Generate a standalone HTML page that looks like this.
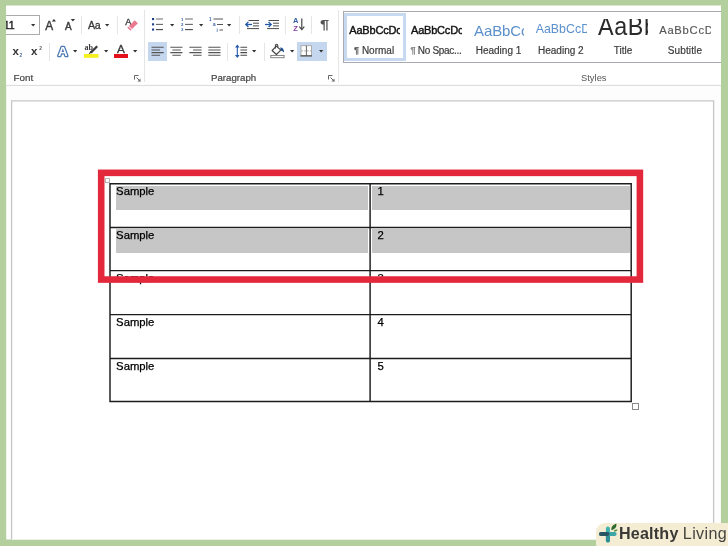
<!DOCTYPE html>
<html>
<head>
<meta charset="utf-8">
<title>Word table selection</title>
<style>
html,body{margin:0;padding:0;}
body{width:728px;height:546px;overflow:hidden;background:#b3cf9e;font-family:"Liberation Sans",sans-serif;position:relative;}
div,span{box-sizing:border-box;}
.a{position:absolute;}
.t{position:absolute;white-space:nowrap;color:#444;line-height:1;}
.sep{position:absolute;width:1px;background:#e5e5e5;}
.dd{position:absolute;width:0;height:0;border-left:2.5px solid transparent;border-right:2.5px solid transparent;border-top:2.8px solid #444;}
svg{position:absolute;overflow:visible;}
.hl{position:absolute;background:#c6c6c6;}
.bl{position:absolute;background:#1c1c1c;}
.ct{position:absolute;font-size:11.3px;color:#000;-webkit-text-stroke:0.25px #000;line-height:1;white-space:nowrap;}
.gl{position:absolute;font-size:10px;color:#3c3c3c;-webkit-text-stroke:0.2px #3c3c3c;line-height:1;white-space:nowrap;}
</style>
</head>
<body>
<div id="root" style="position:absolute;left:0;top:0;width:728px;height:546px;will-change:transform;">
<svg style="left:0;top:0;" width="728" height="546" viewBox="0 0 728 546"><rect x="6.2" y="5.7" width="714.7" height="533.8" fill="#fdfdfd"/><rect x="6.2" y="5.7" width="714.7" height="79.3" fill="#fff"/><path d="M6.2 85.4 H720.9" stroke="#d9d9d9" stroke-width="1"/></svg>
<svg style="left:0;top:0;" width="728" height="546" viewBox="0 0 728 546"><path d="M11.6 539.5 V100.9 H713.6 V539.5" fill="#fff" stroke="#c6c6c8" stroke-width="1.3"/></svg>
<!-- font group -->
<div class="a" style="left:6px;top:15px;width:34px;height:19.5px;border:1px solid #ababab;border-left:none;background:#fff;overflow:hidden;"><div class="t" style="left:-2.3px;top:3.6px;font-size:10.6px;color:#222;-webkit-text-stroke:0.4px #222;">11</div></div>
<svg style="left:30.95px;top:23.9px;" width="5" height="3" viewBox="0 0 5 3"><path d="M0 0 H4.3 L2.15 2.6 Z" fill="#333"/></svg>
<div class="t" style="left:45.2px;top:20.5px;font-size:11.9px;color:#3a3a3a;-webkit-text-stroke:0.4px #3a3a3a;">A</div>
<svg style="left:52.2px;top:19px;" width="4" height="3" viewBox="0 0 4 3"><path d="M-0.2 2.5 H4 L1.9 0 Z" fill="#333"/></svg>
<div class="t" style="left:65px;top:21.5583px;font-size:10px;color:#3a3a3a;-webkit-text-stroke:0.4px #3a3a3a;">A</div>
<svg style="left:71px;top:18.9px;" width="4" height="3" viewBox="0 0 4 3"><path d="M-0.2 0 H4 L1.9 2.5 Z" fill="#333"/></svg>
<div class="sep" style="left:81px;top:16px;height:18px;"></div>
<div class="t" style="left:88.1px;top:19.6px;font-size:10.7px;letter-spacing:-0.35px;color:#3a3a3a;-webkit-text-stroke:0.3px #3a3a3a;">Aa</div>
<svg style="left:105.15px;top:23.7px;" width="5" height="3" viewBox="0 0 5 3"><path d="M0 0 H4.3 L2.15 2.6 Z" fill="#333"/></svg>
<div class="sep" style="left:117px;top:16px;height:18px;"></div>
<svg style="left:124px;top:17px;" width="15" height="15" viewBox="0 0 15 15">
<text x="1.2" y="8.3" font-family="Liberation Sans, sans-serif" font-size="9.2" fill="#333" stroke="#333" stroke-width="0.3">A</text>
<g transform="rotate(-45 8.7 8.3)"><rect x="5.6" y="6.1" width="8.2" height="4.4" fill="#e8798f"/><rect x="3.3" y="6.1" width="1.5" height="4.4" fill="#e8798f"/></g>
</svg>
<div class="t" style="left:12.5px;top:46px;font-size:11.5px;font-weight:bold;color:#333;">x</div>
<div class="t" style="left:19.5px;top:53.9px;font-size:4.8px;font-weight:bold;color:#4a6a9a;">2</div>
<div class="t" style="left:31px;top:46px;font-size:11.5px;font-weight:bold;color:#333;">x</div>
<div class="t" style="left:39.3px;top:46.8px;font-size:4.8px;font-weight:bold;color:#555;">2</div>
<div class="sep" style="left:49px;top:43px;height:18px;"></div>
<svg style="left:55px;top:42px;" width="16" height="16" viewBox="0 0 16 16">
<text x="7.8" y="13.6" text-anchor="middle" font-family="Liberation Sans, sans-serif" font-size="13.4" font-weight="bold" fill="#fff" stroke="#4b78b3" stroke-width="2.5" stroke-linejoin="round" paint-order="stroke">A</text>
</svg>
<svg style="left:72.95px;top:50px;" width="5" height="3" viewBox="0 0 5 3"><path d="M0 0 H4.3 L2.15 2.6 Z" fill="#333"/></svg>
<svg style="left:83.8px;top:44px;" width="15" height="15" viewBox="0 0 15 15">
<text x="0.6" y="6.2" font-family="Liberation Serif, serif" font-size="8" font-weight="bold" fill="#3a3a3a">ab</text>
<path d="M13.2 2.2 L6.8 8.6" stroke="#3a3a3a" stroke-width="2.3" stroke-linecap="butt"/>
<path d="M6.6 7 L4.4 10.4 L8 8.6 Z" fill="#3a3a3a"/>
<rect x="0" y="10" width="14.5" height="3.8" fill="#f6f01e"/>
</svg>
<svg style="left:103.55px;top:50.1px;" width="5" height="3" viewBox="0 0 5 3"><path d="M0 0 H4.3 L2.15 2.6 Z" fill="#333"/></svg>
<div class="t" style="left:116.9px;top:44.2px;font-size:11.8px;color:#3a3a3a;-webkit-text-stroke:0.3px #3a3a3a;">A</div>
<div class="a" style="left:113.8px;top:54.1px;width:14px;height:3.6px;background:#e4101c;"></div>
<svg style="left:132.85px;top:50.1px;" width="5" height="3" viewBox="0 0 5 3"><path d="M0 0 H4.3 L2.15 2.6 Z" fill="#333"/></svg>
<div class="t" style="left:13.5px;top:72.9px;font-size:9.8px;color:#444;-webkit-text-stroke:0.2px #444;">Font</div>
<svg style="left:134px;top:75px;" width="7" height="7" viewBox="0 0 7 7">
<path d="M0.5 4.5 V0.5 H4.5" fill="none" stroke="#666" stroke-width="1"/>
<path d="M2.5 2.5 L6.3 6.3" stroke="#666" stroke-width="1"/>
<path d="M6.5 3.4 V6.5 H3.4 Z" fill="#666"/>
</svg>
<div class="sep" style="left:144px;top:10px;height:72px;"></div>
<!-- paragraph group -->
<svg style="left:151px;top:17px;" width="13" height="15" viewBox="0 0 13 15">
<g fill="#1f3f8f"><rect x="1" y="1" width="2.1" height="2.1"/><rect x="1" y="6.3" width="2.1" height="2.1"/><rect x="1" y="11.5" width="2.1" height="2.1"/></g>
<g stroke-width="1.1"><path d="M4.9 2 H12" stroke="#777"/><path d="M4.9 7.4 H12" stroke="#666"/><path d="M4.9 12.6 H12" stroke="#444"/></g>
</svg>
<svg style="left:169.85px;top:23.5px;" width="5" height="3" viewBox="0 0 5 3"><path d="M0 0 H4.3 L2.15 2.6 Z" fill="#333"/></svg>
<svg style="left:180px;top:17px;" width="13" height="15" viewBox="0 0 13 15">
<g font-family="Liberation Sans, sans-serif" font-size="4.3" font-weight="bold" fill="#2f5fa8"><text x="1" y="3.6">1</text><text x="1" y="9">2</text><text x="1" y="14.2">3</text></g>
<g stroke-width="1.1"><path d="M5 2 H12.9" stroke="#777"/><path d="M5 7.4 H12.9" stroke="#666"/><path d="M5 12.6 H12.9" stroke="#444"/></g>
</svg>
<svg style="left:198.85px;top:23.5px;" width="5" height="3" viewBox="0 0 5 3"><path d="M0 0 H4.3 L2.15 2.6 Z" fill="#333"/></svg>
<svg style="left:209px;top:17px;" width="15" height="15" viewBox="0 0 15 15">
<g font-family="Liberation Sans, sans-serif" font-size="4.6" font-weight="bold" fill="#2f5fa8"><text x="0" y="3.8">1</text><text x="4" y="9.2">a</text><text x="7.5" y="14.6">i</text></g>
<g stroke="#555" stroke-width="1.1"><path d="M4.5 2 H14 M8 7.5 H14 M10.5 13 H14"/></g>
</svg>
<svg style="left:226.55px;top:23.5px;" width="5" height="3" viewBox="0 0 5 3"><path d="M0 0 H4.3 L2.15 2.6 Z" fill="#333"/></svg>
<div class="sep" style="left:239px;top:16px;height:18px;"></div>
<svg style="left:245px;top:19px;" width="14" height="11" viewBox="0 0 14 11">
<g stroke="#4a4a4a" stroke-width="1"><path d="M3.5 1.5 H14 M8 4.2 H14 M8 6.9 H14 M2 9.6 H14"/></g>
<path d="M7 5.5 H1" stroke="#2457a6" stroke-width="1.3"/><path d="M3.4 3 L0.8 5.5 L3.4 8" fill="none" stroke="#2457a6" stroke-width="1.3"/>
</svg>
<svg style="left:265px;top:19px;" width="14" height="11" viewBox="0 0 14 11">
<g stroke="#4a4a4a" stroke-width="1"><path d="M3.5 1.5 H14 M8 4.2 H14 M8 6.9 H14 M2 9.6 H14"/></g>
<path d="M0 5.5 H6" stroke="#2457a6" stroke-width="1.3"/><path d="M3.6 3 L6.2 5.5 L3.6 8" fill="none" stroke="#2457a6" stroke-width="1.3"/>
</svg>
<div class="sep" style="left:285px;top:16px;height:18px;"></div>
<svg style="left:293px;top:17px;" width="13" height="14" viewBox="0 0 13 14">
<text x="0" y="6.3" font-family="Liberation Sans, sans-serif" font-size="7.5" font-weight="bold" fill="#2f5fa8">A</text>
<text x="0.3" y="13.6" font-family="Liberation Sans, sans-serif" font-size="7.5" font-weight="bold" fill="#8b3fa0">Z</text>
<path d="M8.8 1.5 V12.3" stroke="#444" stroke-width="1.2"/><path d="M6.3 9.6 L8.8 12.6 L11.3 9.6" fill="none" stroke="#444" stroke-width="1.2"/>
</svg>
<div class="sep" style="left:311px;top:16px;height:18px;"></div>
<div class="t" style="left:319.8px;top:18.2px;font-size:13.2px;font-weight:bold;color:#555;transform:scaleX(1.25);transform-origin:0 0;">&para;</div>
<div class="a" style="left:148px;top:42px;width:19px;height:19.2px;background:#c5d6ef;"></div>
<svg style="left:0;top:0;" width="728" height="100" viewBox="0 0 728 100"><path d="M151.5 47.3 H163.7 M151.5 50.0 H160.1 M151.5 52.6 H163.7 M151.5 55.3 H160.1 M170.3 47.3 H182.5 M172.4 50.0 H180.8 M170.3 52.6 H182.5 M172.4 55.3 H180.8 M189.4 47.3 H201.6 M193.1 50.0 H201.6 M189.4 52.6 H201.6 M193.1 55.3 H201.6 M208.3 47.3 H220.5 M208.3 50.0 H220.5 M208.3 52.6 H220.5 M208.3 55.3 H220.5 " stroke="#555" stroke-width="1.1" fill="none"/></svg>
<div class="sep" style="left:227px;top:43px;height:18px;"></div>
<svg style="left:235px;top:44px;" width="13" height="14" viewBox="0 0 13 14">
<path d="M2.3 2 V12.6" stroke="#2457a6" stroke-width="1.1"/><path d="M0 3.6 L2.3 0.6 L4.6 3.6 Z M0 11 L2.3 14 L4.6 11 Z" fill="#2457a6"/>
<g stroke="#4a4a4a" stroke-width="1.05"><path d="M5.4 3.3 H12.1 M5.4 6 H12.1 M5.4 8.6 H12.1 M5.4 11.2 H12.1"/></g>
</svg>
<svg style="left:251.65px;top:50px;" width="5" height="3" viewBox="0 0 5 3"><path d="M0 0 H4.3 L2.15 2.6 Z" fill="#333"/></svg>
<div class="sep" style="left:264px;top:43px;height:18px;"></div>
<svg style="left:270px;top:43px;" width="15" height="15" viewBox="0 0 15 15">
<path d="M6.4 3.2 L2.1 7.5 L6.4 11.5 L10.8 7.1 Z" fill="#fff" stroke="#444" stroke-width="1.1" stroke-linejoin="round"/>
<path d="M5.4 5.6 V2.6 Q5.4 1.2 6.6 1.2 Q7.8 1.2 7.8 2.6 V4.6" fill="none" stroke="#444" stroke-width="1.1"/>
<path d="M10.2 4.6 Q13.8 4.4 14.1 9.6 Q12.6 7.8 10.9 7.4 Z" fill="#1f4e8f"/>
<rect x="0.8" y="12.4" width="13.3" height="2.3" fill="#fff" stroke="#777" stroke-width="0.9"/>
</svg>
<svg style="left:289.65px;top:49.9px;" width="5" height="3" viewBox="0 0 5 3"><path d="M0 0 H4.3 L2.15 2.6 Z" fill="#333"/></svg>
<div class="a" style="left:297px;top:42px;width:29.5px;height:19.2px;background:#c5d6ef;"></div>
<svg style="left:300px;top:45px;" width="12" height="12" viewBox="0 0 12 12">
<rect x="1" y="0.7" width="10.5" height="10" fill="#fff" stroke="#a5a5a5" stroke-width="0.9"/>
<path d="M1.5 5.9 H11" stroke="#9a9a9a" stroke-width="0.9" stroke-dasharray="1.6 1.2"/>
<path d="M6.4 0.7 V10.6" stroke="#666" stroke-width="1"/>
<path d="M0.5 10.9 H12" stroke="#4a4a4a" stroke-width="1.2"/>
</svg>
<svg style="left:318.65px;top:49.9px;" width="5" height="3" viewBox="0 0 5 3"><path d="M0 0 H4.3 L2.15 2.6 Z" fill="#333"/></svg>
<div class="t" style="left:211px;top:72.9px;font-size:9.7px;color:#444;-webkit-text-stroke:0.2px #444;">Paragraph</div>
<svg style="left:328px;top:75px;" width="7" height="7" viewBox="0 0 7 7">
<path d="M0.5 4.5 V0.5 H4.5" fill="none" stroke="#666" stroke-width="1"/>
<path d="M2.5 2.5 L6.3 6.3" stroke="#666" stroke-width="1"/>
<path d="M6.5 3.4 V6.5 H3.4 Z" fill="#666"/>
</svg>
<div class="sep" style="left:338px;top:10px;height:72px;"></div>
<!-- styles -->
<div class="a" style="left:343px;top:11px;width:378px;height:51.5px;background:#fff;border:1px solid #aaa9b0;border-right:none;"></div>
<div class="a" style="left:344px;top:12.5px;width:61.5px;height:48px;border:3px solid #c7d8f1;background:#fff;"></div>
<div class="a" style="left:349px;top:18.5px;width:50.6px;height:21px;overflow:hidden;"><div class="t" style="left:0.3px;top:6.4885px;font-size:11px;color:#111;-webkit-text-stroke:0.4px #111;letter-spacing:-0.2px;">AaBbCcDc</div></div>
<div class="gl" style="left:354px;top:45.935px;font-size:10px;"><span style="font-size:9.5px;color:#555;position:relative;top:-1.3px;">&para;</span> Normal</div>
<div class="a" style="left:411px;top:18.5px;width:50.8px;height:21px;overflow:hidden;"><div class="t" style="left:0px;top:6.4885px;font-size:11px;color:#111;-webkit-text-stroke:0.4px #111;letter-spacing:-0.2px;">AaBbCcDc</div></div>
<div class="gl" style="left:410.5px;top:45.935px;font-size:10px;letter-spacing:-0.3px;"><span style="font-size:9.5px;color:#999;position:relative;top:-1.3px;">&para;</span> No Spac...</div>
<div class="a" style="left:473px;top:18.5px;width:51px;height:21px;overflow:hidden;"><div class="t" style="left:1px;top:4.6025px;font-size:15px;color:#5b90cb;letter-spacing:-0.1px;">AaBbCc</div></div>
<div class="gl" style="left:475.7px;top:45.935px;font-size:10px;">Heading 1</div>
<div class="a" style="left:535px;top:18.5px;width:52px;height:21px;overflow:hidden;"><div class="t" style="left:0.7px;top:4.8034px;font-size:12.4px;color:#5b90cb;">AaBbCcD</div></div>
<div class="gl" style="left:538px;top:45.935px;font-size:10px;">Heading 2</div>
<div class="a" style="left:597px;top:18.5px;width:51.3px;height:21px;overflow:hidden;"><div class="t" style="left:1.4px;top:-5.23225px;font-size:26.5px;color:#2a2a2a;letter-spacing:0.7px;transform:scaleX(0.88);transform-origin:0 0;">AaBb</div></div>
<div class="gl" style="left:613.7px;top:45.935px;font-size:10px;">Title</div>
<div class="a" style="left:659px;top:18.5px;width:51.5px;height:21px;overflow:hidden;"><div class="t" style="left:0.2px;top:6.7192px;font-size:11.2px;color:#555;-webkit-text-stroke:0.15px #555;letter-spacing:0.75px;">AaBbCcD</div></div>
<div class="gl" style="left:667.8px;top:45.935px;font-size:10px;letter-spacing:0.12px;">Subtitle</div>
<div class="t" style="left:581px;top:73.3px;font-size:9.4px;color:#555;">Styles</div>
<!-- table -->
<div class="hl" style="left:116px;top:185.5px;width:252.4px;height:24.2px;"></div>
<div class="hl" style="left:371.6px;top:185.5px;width:258.2px;height:24.2px;"></div>
<div class="hl" style="left:116px;top:229.4px;width:252.4px;height:24.1px;"></div>
<div class="hl" style="left:371.6px;top:229.4px;width:258.2px;height:24.1px;"></div>
<svg style="left:0;top:0;" width="728" height="546" viewBox="0 0 728 546"><path d="M109.3 183.7 H631.9 M109.3 227.4 H631.9 M109.3 270.6 H631.9 M109.3 314.6 H631.9 M109.3 358.4 H631.9 M109.3 401.5 H631.9 M110 183 V402.2 M370.1 183 V402.2 M631.2 183 V402.2 " fill="none" stroke="#1c1c1c" stroke-width="1.45"/></svg>
<div class="ct" style="left:116.1px;top:186.4px;">Sample</div>
<div class="ct" style="left:377.4px;top:186.4px;">1</div>
<div class="ct" style="left:116.1px;top:230.1px;">Sample</div>
<div class="ct" style="left:377.4px;top:230.1px;">2</div>
<div class="ct" style="left:116.1px;top:273.3px;">Sample</div>
<div class="ct" style="left:377.4px;top:273.3px;">3</div>
<div class="ct" style="left:116.1px;top:317.3px;">Sample</div>
<div class="ct" style="left:377.4px;top:317.3px;">4</div>
<div class="ct" style="left:116.1px;top:361.1px;">Sample</div>
<div class="ct" style="left:377.4px;top:361.1px;">5</div>
<div class="a" style="left:632px;top:402.5px;width:7px;height:7px;border:1px solid #8a8a8a;background:#fff;"></div>
<div class="a" style="left:105px;top:177.5px;width:4.5px;height:5px;border:1px solid #b5b5b5;background:#fff;"></div>
<svg style="left:0;top:0;" width="728" height="546" viewBox="0 0 728 546"><rect x="101.2" y="172.85" width="538.7" height="106.7" fill="none" stroke="#e3283c" stroke-width="6.6"/></svg>
<!-- watermark -->
<div class="a" style="left:595.6px;top:523px;width:140px;height:30px;background:#f5ecd4;border-radius:9px;"></div>
<svg style="left:598px;top:522px;" width="21" height="22" viewBox="0 0 21 22">
<path d="M9.9 6.6 V18.6" stroke="#3eb2ae" stroke-width="4" stroke-linecap="round"/>
<path d="M9.9 12.2 V18.6" stroke="#2f8f95" stroke-width="4" stroke-linecap="round"/>
<path d="M3 12.1 H16.6" stroke="#3aa7a6" stroke-width="4" stroke-linecap="round"/>
<path d="M3 12.1 H9.5" stroke="#2b5564" stroke-width="4" stroke-linecap="round"/>
<path d="M13.4 8.2 Q12.6 3.4 18.4 1.4 Q19.2 6.6 13.4 8.2 Z" fill="#2d6a2c"/>
<path d="M15.6 9.4 Q16.6 7 19.6 7.8 Q18.6 10.2 15.6 9.4 Z" fill="#3f8a37"/>
</svg>
<div class="t" style="left:618.9px;top:525.171px;font-size:16.1px;font-weight:bold;color:#3a3935;letter-spacing:0.22px;">Healthy</div>
<div class="t" style="left:682.8px;top:525.171px;font-size:16.1px;color:#45443f;letter-spacing:0.38px;">Living</div>
</div>
</body>
</html>
